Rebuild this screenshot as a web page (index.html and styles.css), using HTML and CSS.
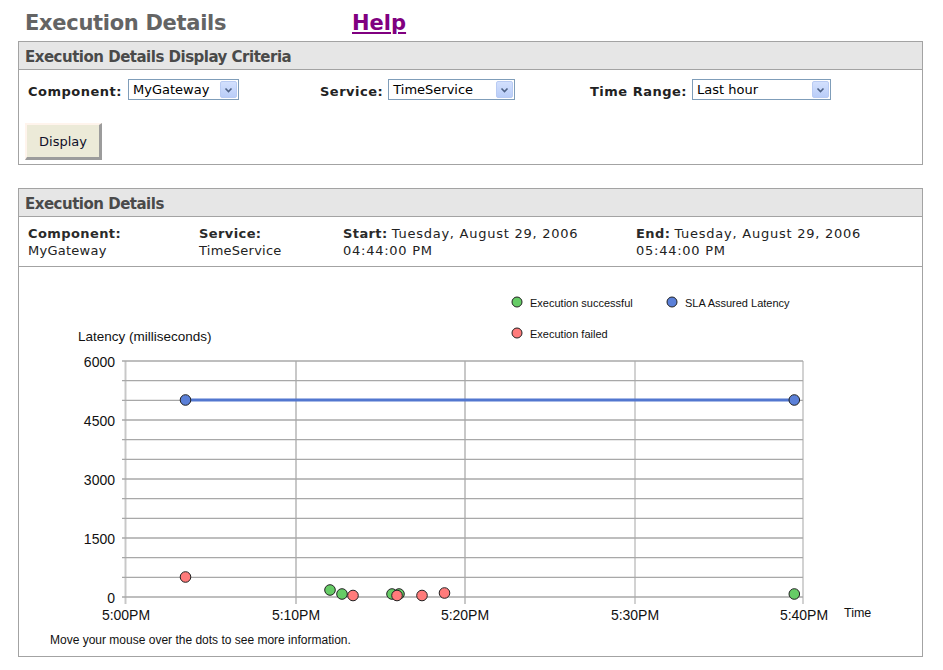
FILE: index.html
```html
<!DOCTYPE html>
<html>
<head>
<meta charset="utf-8">
<title>Execution Details</title>
<link rel="stylesheet" href="styles.css">
</head>
<body>
<div class="page-head">
  <h1 class="page-title">Execution Details</h1>
  <a class="help-link" href="#">Help</a>
</div>

<div class="panel">
  <div class="panel-header">Execution Details Display Criteria</div>
  <div class="criteria">
    <div class="form-row">
      <div class="field field-component">
        <span class="field-label">Component:</span>
        <div class="select select-component"><span class="select-value">MyGateway</span><span class="select-btn"><svg width="9" height="6" viewBox="0 0 9 6"><path d="M1.5 1.5 L4.5 4.5 L7.5 1.5" fill="none" stroke="#4d6185" stroke-width="1.6"/></svg></span></div>
      </div>
      <div class="field field-service">
        <span class="field-label">Service:</span>
        <div class="select select-service"><span class="select-value">TimeService</span><span class="select-btn"><svg width="9" height="6" viewBox="0 0 9 6"><path d="M1.5 1.5 L4.5 4.5 L7.5 1.5" fill="none" stroke="#4d6185" stroke-width="1.6"/></svg></span></div>
      </div>
      <div class="field">
        <span class="field-label">Time Range:</span>
        <div class="select select-range"><span class="select-value">Last hour</span><span class="select-btn"><svg width="9" height="6" viewBox="0 0 9 6"><path d="M1.5 1.5 L4.5 4.5 L7.5 1.5" fill="none" stroke="#4d6185" stroke-width="1.6"/></svg></span></div>
      </div>
    </div>
    <button class="display-btn" type="button">Display</button>
  </div>
</div>

<div class="panel panel-details">
  <div class="panel-header">Execution Details</div>
  <div class="info-row">
    <div class="info-cell"><b>Component:</b><br><span class="val-name">MyGateway</span></div>
    <div class="info-cell"><b>Service:</b><br><span class="val-name">TimeService</span></div>
    <div class="info-cell"><b>Start:</b> <span class="val-date">Tuesday, August 29, 2006</span><br><span class="val-date">04:44:00 PM</span></div>
    <div class="info-cell"><b>End:</b> <span class="val-date">Tuesday, August 29, 2006</span><br><span class="val-date">05:44:00 PM</span></div>
  </div>
  <div class="chart">
    <svg class="chart-svg" width="903" height="389" viewBox="19 267 903 389">
      <!-- legend -->
      <circle cx="517" cy="302" r="5" fill="#66cc66" stroke="#222" stroke-width="1"/>
      <text x="530" y="307" class="legend">Execution successful</text>
      <circle cx="672" cy="302" r="5" fill="#5b80d8" stroke="#222" stroke-width="1"/>
      <text x="685" y="307" class="legend">SLA Assured Latency</text>
      <circle cx="517" cy="333" r="5" fill="#ff7b7b" stroke="#222" stroke-width="1"/>
      <text x="530" y="338" class="legend">Execution failed</text>

      <text x="78" y="341" class="axis-title">Latency (milliseconds)</text>

      <!-- vertical grid -->
      <g stroke="#c8c8c8" stroke-width="2">
        <line x1="125.5" y1="361" x2="125.5" y2="604"/>
        <line x1="296" y1="361" x2="296" y2="604"/>
        <line x1="465" y1="361" x2="465" y2="604"/>
      </g>
      <g stroke="#b4b4b4" stroke-width="1.2">
        <line x1="635" y1="361" x2="635" y2="604"/>
        <line x1="803" y1="361" x2="803" y2="604"/>
      </g>
      <!-- horizontal grid -->
      <g stroke="#a8a8a8" stroke-width="1.3">
        <line x1="122" y1="361" x2="803" y2="361"/>
        <line x1="122" y1="380.7" x2="803" y2="380.7"/>
        <line x1="122" y1="400.3" x2="803" y2="400.3"/>
        <line x1="122" y1="420" x2="803" y2="420"/>
        <line x1="122" y1="439.7" x2="803" y2="439.7"/>
        <line x1="122" y1="459.3" x2="803" y2="459.3"/>
        <line x1="122" y1="479" x2="803" y2="479"/>
        <line x1="122" y1="498.7" x2="803" y2="498.7"/>
        <line x1="122" y1="518.3" x2="803" y2="518.3"/>
        <line x1="122" y1="538" x2="803" y2="538"/>
        <line x1="122" y1="557.7" x2="803" y2="557.7"/>
        <line x1="122" y1="577.3" x2="803" y2="577.3"/>
        <line x1="122" y1="597" x2="803" y2="597"/>
      </g>

      <!-- y labels -->
      <g class="tick" text-anchor="end">
        <text x="115" y="367">6000</text>
        <text x="115" y="426">4500</text>
        <text x="115" y="485">3000</text>
        <text x="115" y="544">1500</text>
        <text x="115" y="603">0</text>
      </g>
      <!-- x labels -->
      <g class="tick" text-anchor="middle">
        <text x="126" y="620">5:00PM</text>
        <text x="296" y="620">5:10PM</text>
        <text x="465" y="620">5:20PM</text>
        <text x="635" y="620">5:30PM</text>
        <text x="804" y="620">5:40PM</text>
      </g>
      <text x="844" y="617" class="time-label">Time</text>

      <!-- SLA line -->
      <line x1="185" y1="400" x2="794" y2="400" stroke="#5277cf" stroke-width="3"/>
      <circle cx="185.5" cy="400" r="5.3" fill="#5b80d8" stroke="#222" stroke-width="1"/>
      <circle cx="794.3" cy="400" r="5.3" fill="#5b80d8" stroke="#222" stroke-width="1"/>

      <!-- data points -->
      <g stroke="#222" stroke-width="1">
        <circle cx="185.5" cy="577" r="5.3" fill="#ff7b7b"/>
        <circle cx="330" cy="590" r="5.3" fill="#66cc66"/>
        <circle cx="342" cy="594" r="5.3" fill="#66cc66"/>
        <circle cx="353" cy="595.5" r="5.3" fill="#ff7b7b"/>
        <circle cx="392" cy="594" r="5.3" fill="#66cc66"/>
        <circle cx="399" cy="594" r="5.3" fill="#66cc66"/>
        <circle cx="397" cy="595.5" r="5.3" fill="#ff7b7b"/>
        <circle cx="422" cy="595.5" r="5.3" fill="#ff7b7b"/>
        <circle cx="444.5" cy="593" r="5.3" fill="#ff7b7b"/>
        <circle cx="794.3" cy="594" r="5.3" fill="#66cc66"/>
      </g>

      <text x="50" y="644" class="note">Move your mouse over the dots to see more information.</text>
    </svg>
  </div>
</div>
</body>
</html>
```
FILE: styles.css
```css
html, body {
  margin: 0;
  padding: 0;
  background: #ffffff;
}
body {
  padding: 0 20px 0 18px;
  font-family: "DejaVu Sans", Verdana, sans-serif;
  font-size: 13px;
  color: #222222;
}
.page-head {
  display: flex;
  height: 41px;
}
.page-title {
  margin: 0;
  width: 327px;
  padding: 6px 0 0 7px;
  line-height: 35px;
  font-size: 21px;
  letter-spacing: -0.3px;
  font-weight: bold;
  color: #646464;
}
.help-link {
  padding-top: 6px;
  line-height: 35px;
  font-size: 21px;
  font-weight: bold;
  color: #800080;
  text-decoration: underline;
  text-decoration-thickness: 2px;
  text-underline-offset: 2px;
}
.panel {
  width: 903px;
  border: 1px solid #a3a3a3;
}
.panel-details {
  margin-top: 23px;
}
.panel-header {
  height: 27px;
  line-height: 31px;
  background: #e6e6e6;
  border-bottom: 1px solid #a3a3a3;
  padding-left: 6px;
  font-size: 15px;
  letter-spacing: -0.5px;
  font-weight: bold;
  color: #4a4a4a;
}
.criteria {
  padding: 9px 0 4px 6px;
}
.form-row {
  display: flex;
  padding-left: 3px;
}
.field {
  display: flex;
  align-items: flex-start;
}
.field-component { width: 292px; }
.field-service { width: 270px; }
.field-label {
  padding-top: 5px;
  line-height: 16px;
  font-weight: bold;
  letter-spacing: 0.5px;
  margin-right: 5px;
  color: #222222;
}
.select {
  display: flex;
  height: 19px;
  border: 1px solid #7f9db9;
  background: #ffffff;
}
.select-component { width: 109px; margin-left: 1px; }
.select-service { width: 125px; }
.select-range { width: 137px; }
.select-value {
  flex: 1;
  padding-left: 4px;
  line-height: 19px;
  color: #000000;
  white-space: nowrap;
  overflow: hidden;
}
.select-btn {
  width: 17px;
  height: 17px;
  margin: 1px 1px 0 0;
  border: 1px solid #b9cbf3;
  border-radius: 2px;
  box-sizing: border-box;
  background: linear-gradient(#d3e0fd, #b9cdf8);
  display: flex;
  align-items: center;
  justify-content: center;
}
.display-btn {
  display: block;
  margin-top: 23px;
  width: 77px;
  height: 37px;
  padding: 0;
  font-family: "DejaVu Sans", Verdana, sans-serif;
  font-size: 13px;
  color: #10102a;
  background: #ecead8;
  border-style: solid;
  border-width: 2px 3px 3px 2px;
  border-color: #fff4ec #9c9c9c #9c9c9c #fff4ec;
}
.info-row {
  display: grid;
  grid-template-columns: 171px 144px 293px 1fr;
  padding: 9px 0 7px 9px;
  line-height: 16.5px;
  border-bottom: 1px solid #a3a3a3;
}
.info-cell b {
  color: #2a2a2a;
  letter-spacing: 0.4px;
}
.val-name {
  letter-spacing: 0.25px;
}
.val-date {
  letter-spacing: 0.75px;
}
.chart {
  height: 389px;
}
.chart-svg {
  display: block;
  font-family: "Liberation Sans", Arial, sans-serif;
}
.legend {
  font-size: 11px;
  fill: #111111;
}
.axis-title {
  font-size: 13.5px;
  fill: #111111;
}
.tick text {
  font-size: 14px;
  fill: #111111;
}
.time-label {
  font-size: 12.5px;
  fill: #111111;
}
.note {
  font-size: 12px;
  fill: #111111;
}
```
